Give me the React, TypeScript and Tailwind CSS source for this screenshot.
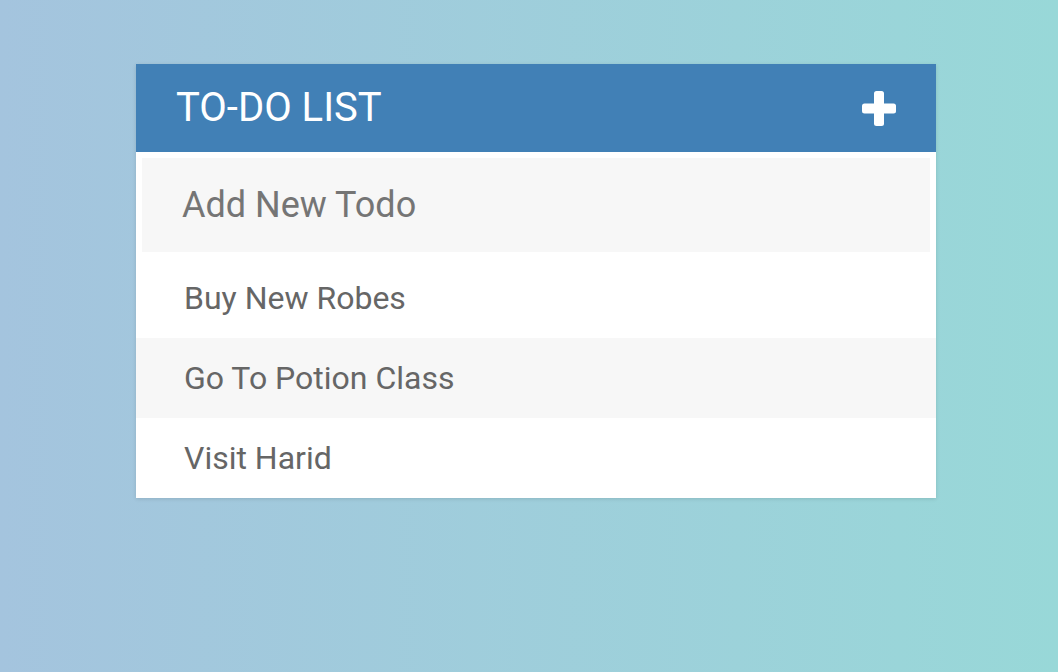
import React from "react";

const items = ["Buy New Robes", "Go To Potion Class", "Visit Harid"];

export default function App() {
  return (
    <div
      className="w-[1058px] h-[672px] bg-gradient-to-r from-[#a4c4de] to-[#98d8d8] pt-[64px] pl-[136px]"
      style={{ fontFamily: "Roboto, 'Liberation Sans', sans-serif" }}
    >
      <div className="w-[800px] bg-white shadow-[0_1px_4px_rgba(0,0,0,0.12)]">
        <div className="h-[88px] bg-[#4180b6] flex items-center justify-between px-[40px]">
          <h1 className="text-white text-[40px] leading-none font-normal">TO-DO LIST</h1>
          <svg width="34" height="35" viewBox="0 0 34 35">
            <rect x="12" y="0" width="10" height="35" rx="2.5" fill="white" />
            <rect x="0" y="12.5" width="34" height="10" rx="2.5" fill="white" />
          </svg>
        </div>
        <div className="p-[6px]">
          <div className="h-[94px] bg-[#f7f7f7] flex items-center pl-[40px]">
            <span className="text-[#757575] text-[36px] leading-none">Add New Todo</span>
          </div>
        </div>
        <ul>
          {items.map((t, i) => (
            <li
              key={t}
              className={`h-[80px] flex items-center pl-[48px] text-[#666666] text-[32px] leading-none ${
                i % 2 === 1 ? "bg-[#f7f7f7]" : "bg-white"
              }`}
            >
              {t}
            </li>
          ))}
        </ul>
      </div>
    </div>
  );
}
